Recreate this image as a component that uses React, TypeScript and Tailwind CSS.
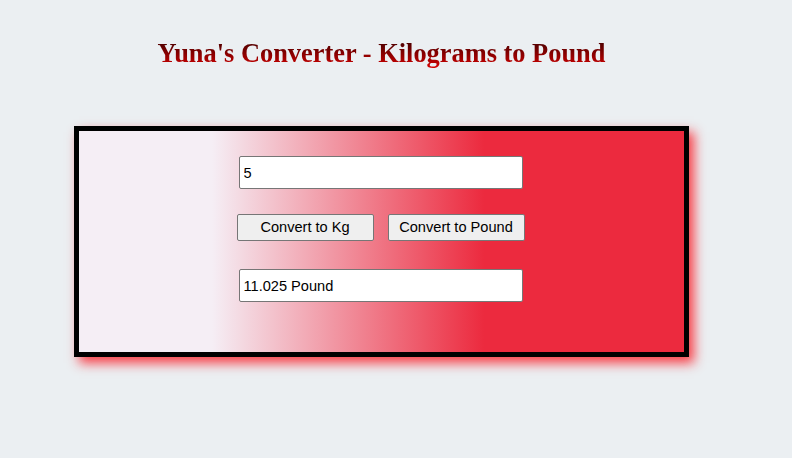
import React from "react";

export default function App() {
  return (
    <div className="min-h-[458px] w-full bg-[#ebeff2] pt-[34px]" style={{ fontFamily: '"Liberation Sans", Arial, sans-serif' }}>
      <div className="ml-[74px] w-[615px]">
        <h1
          className="text-center text-[26.4px] font-bold leading-[38px] bg-gradient-to-b from-[#4a0000] from-20% to-[#f00000] bg-clip-text text-transparent"
          style={{ fontFamily: '"Liberation Serif", "Times New Roman", serif' }}
        >
          Yuna's Converter - Kilograms to Pound
        </h1>
        <div className="mt-[54px] h-[231px] border-[5px] border-black bg-[linear-gradient(to_right,#f5eef5_22%,#ec2a3e_67%)] shadow-[5px_6px_11px_rgba(250,30,40,0.85)] flex flex-col items-center pt-[25px]">
          <input
            type="text"
            defaultValue="5"
            className="mr-[2px] w-[284px] h-[33px] bg-white border border-[#767676] rounded-[2px] px-[4px] text-[14.6px] text-black outline-none"
          />
          <div className="mt-[25px] flex gap-[14px] mr-[2px]">
            <button className="w-[137px] h-[27px] bg-[#efefef] border border-[#767676] rounded-[2px] text-[14.6px] text-black">
              Convert to Kg
            </button>
            <button className="w-[137px] h-[27px] bg-[#efefef] border border-[#767676] rounded-[2px] text-[14.6px] text-black">
              Convert to Pound
            </button>
          </div>
          <input
            type="text"
            readOnly
            value="11.025 Pound"
            className="mr-[2px] mt-[28px] w-[284px] h-[33px] bg-white border border-[#767676] rounded-[2px] px-[4px] text-[14.6px] text-black outline-none"
          />
        </div>
      </div>
    </div>
  );
}
